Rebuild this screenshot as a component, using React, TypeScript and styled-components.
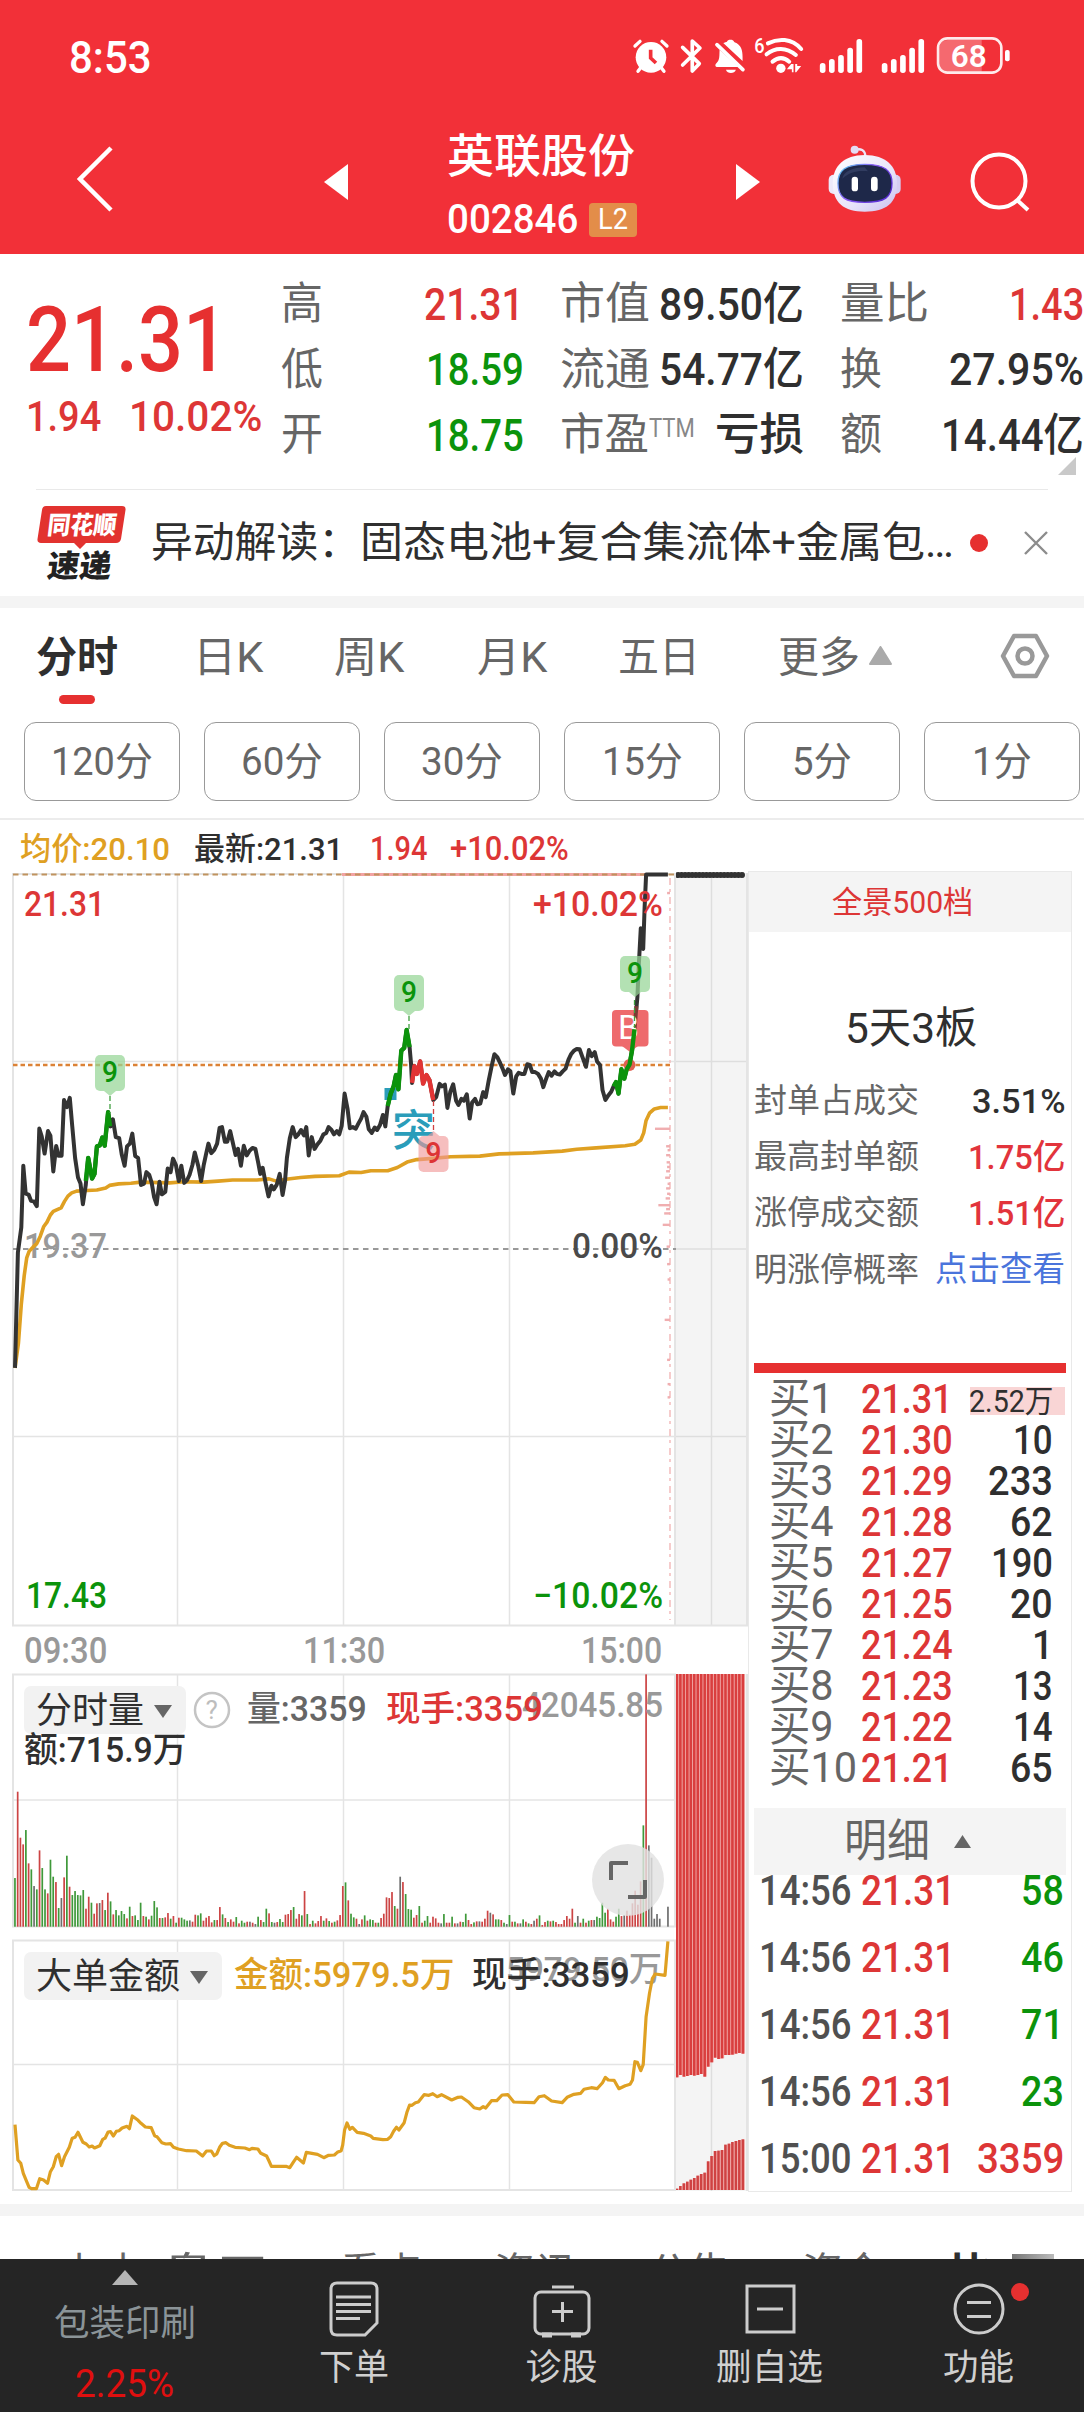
import React, { useLayoutEffect, useRef, useState } from "react";
import styled, { createGlobalStyle } from "styled-components";

const FONT = 'Roboto, "Noto Sans CJK SC", sans-serif';
const C = {
  brand: "#f23038",
  red: "#dd3636",
  green: "#0b930b",
  ink: "#2f2f2f",
  grey: "#666666",
  pale: "#999999",
  band: "#f4f4f4",
  line: "#e4e4e4",
  gold: "#dfa022",
};

const Global = createGlobalStyle`
  html, body { margin: 0; padding: 0; background: #fff; }
  body { width: 1084px; height: 2412px; overflow: hidden; font-family: ${FONT}; }
  * { box-sizing: border-box; }
`;

/* ---------- text that is condensed to a given width ---------- */
const FitBox = styled.span<{ $w: number; $size: number; $color: string; $weight: number }>`
  display: block;
  flex: none;
  width: ${(p) => p.$w}px;
  height: ${(p) => Math.round(p.$size * 1.2)}px;
  line-height: ${(p) => Math.round(p.$size * 1.2)}px;
  font-size: ${(p) => p.$size}px;
  font-weight: ${(p) => p.$weight};
  color: ${(p) => p.$color};
  white-space: nowrap;
`;
const FitInner = styled.span`
  display: inline-block;
  vertical-align: top;
  transform-origin: 0 50%;
`;

function Fit(props: { w: number; size: number; color?: string; weight?: number; children: React.ReactNode }) {
  const ref = useRef<HTMLSpanElement>(null);
  const [scale, setScale] = useState(1);
  useLayoutEffect(() => {
    if (ref.current) setScale(props.w / ref.current.offsetWidth);
  }, [props.w, props.children]);
  return (
    <FitBox $w={props.w} $size={props.size} $color={props.color ?? C.ink} $weight={props.weight ?? 400}>
      <FitInner ref={ref} style={{ transform: `scaleX(${scale})` }}>
        {props.children}
      </FitInner>
    </FitBox>
  );
}

/* ---------- frame ---------- */
const Screen = styled.div`
  width: 1084px;
  height: 2412px;
  display: flex;
  flex-direction: column;
  background: #fff;
  overflow: hidden;
`;
const Band = styled.div`
  height: 12px;
  flex: none;
  background: ${C.band};
`;

/* ---------- red header ---------- */
const Header = styled.header`
  height: 254px;
  flex: none;
  background: ${C.brand};
  color: #fff;
`;
const StatusBar = styled.div`
  height: 110px;
  display: flex;
  justify-content: space-between;
  align-items: flex-start;
  padding: 31px 71px 0 69px;
`;
const StatusSvg = styled.svg`
  margin-top: 4px;
  display: block;
`;
const TitleBar = styled.div`
  height: 144px;
  display: flex;
  align-items: center;
  padding-left: 77px;
`;
const BackSvg = styled.svg`
  margin: -6px 211px 0 0;
`;
const TitleBlock = styled.div`
  width: 190px;
  height: 132px;
  padding-top: 9px;
  margin: 0 99px 0 99px;
`;
const TitleLine = styled.div`
  height: 63px;
  display: flex;
  align-items: center;
  justify-content: space-between;
`;
const Level = styled.span`
  width: 48px;
  height: 34px;
  border-radius: 4px;
  background: #e38d49;
  display: flex;
  align-items: center;
  justify-content: center;
`;
const RobotSvg = styled.svg`
  margin: -6px 69px 0 68px;
`;

function StatusIcons() {
  const bars = (x: number) =>
    [30, 42, 54, 76, 102].map((h, i) => (
      <rect key={i} x={x + i * 27.5} y={144 - h} width="17" height={h} rx="8" fill="#fff" />
    ));
  return (
    <StatusSvg width="383" height="42" viewBox="30 30 1150 126">
      <g fill="#fff" stroke="#fff" strokeLinecap="round">
        <circle cx="93" cy="97" r="46" stroke="none" />
        <path d="M45 63 L60 49 M126 49 L141 63 M62 128 L54 139 M124 128 L132 139" strokeWidth="10" fill="none" />
        <path d="M92 74 V99 L108 114" stroke={C.brand} strokeWidth="11" fill="none" strokeLinecap="butt" />
        <path d="M188 67 L238 116 L217 138 V48 L240 69 L188 120" fill="none" strokeWidth="11" strokeLinejoin="round" />
        <path d="M332 44 c9 0 10 6 12 8 c20 8 24 24 24 44 l0 12 l-58 -54 c4 -2 9 -3 11 -4 c2 -4 5 -6 11 -6z" stroke="none" />
        <path d="M299 74 L356 126 H290 c-6 -3 -4 -8 0 -12 c10 -10 8 -22 9 -40z" stroke="none" />
        <path d="M291 59 L369 134" strokeWidth="11" />
        <path d="M318 134 h30 c-4 13 -26 13 -30 0z" stroke="none" />
        <path d="M444 55 C474 40 515 38 544 72 M440 88 C466 66 500 66 528 90 M458 110 C475 96 492 96 508 110" fill="none" strokeWidth="12" />
        <circle cx="483" cy="130" r="14" stroke="none" />
        <path d="M514 117 L501 133 H516 V142 H521 V117z M526 117 V142 H529 L544 123 H532 V117z" stroke="none" />
      </g>
      <text x="403" y="83" fontSize="62" fontWeight="500" fill="#fff" textLength="31" lengthAdjust="spacingAndGlyphs">6</text>
      {bars(600)}
      {bars(786)}
      <path d="M985 45 H1086 V140 H985 q-26 0 -26 -26 V71 q0 -26 26 -26z" fill="#fff" opacity="0.28" />
      <rect x="955" y="40" width="190" height="103" rx="28" fill="none" stroke="#fff" strokeOpacity="0.9" strokeWidth="8" />
      <rect x="1156" y="75" width="14" height="34" rx="6" fill="#fff" />
      <text x="993" y="126" fontSize="96" fontWeight="600" fill="#fff" textLength="108" lengthAdjust="spacingAndGlyphs">68</text>
    </StatusSvg>
  );
}

function Robot() {
  return (
    <RobotSvg width="73" height="68" viewBox="625 361 219 204">
      <defs>
        <linearGradient id="head" x1="0" y1="0" x2="1" y2="1">
          <stop offset="0" stopColor="#ffffff" />
          <stop offset="0.6" stopColor="#e8e4fa" />
          <stop offset="1" stopColor="#c9bff0" />
        </linearGradient>
        <linearGradient id="rim" x1="0" y1="0" x2="1" y2="0.6">
          <stop offset="0" stopColor="#58d6ef" />
          <stop offset="0.5" stopColor="#8b5cf6" />
          <stop offset="1" stopColor="#5b2fd6" />
        </linearGradient>
      </defs>
      <path d="M706 376 C722 370 737 376 737 396" fill="none" stroke="#ece6f8" strokeWidth="7" />
      <circle cx="705" cy="375" r="12" fill="#e4dcf5" />
      <rect x="627" y="450" width="32" height="58" rx="15" fill="#ece9fa" />
      <rect x="811" y="450" width="32" height="58" rx="15" fill="#d5cef2" />
      <path d="M735 391 C800 391 831 425 832 475 C833 535 800 561 735 561 C672 561 640 535 639 475 C640 425 672 391 735 391z" fill="url(#head)" />
      <path d="M735 419 C795 419 817 438 817 476 C817 518 795 533 735 533 C676 533 655 518 655 476 C655 438 676 419 735 419z" fill="#1e2849" stroke="url(#rim)" strokeWidth="4" />
      <path d="M735 428 C700 428 672 440 668 462 C690 440 720 436 745 440z" fill="#3d4a70" opacity="0.6" />
      <rect x="696" y="456" width="19" height="44" rx="9.5" fill="#fff" />
      <rect x="754" y="456" width="20" height="44" rx="10" fill="#fff" />
    </RobotSvg>
  );
}

/* ---------- quote ---------- */
const Quote = styled.section`
  height: 235px;
  flex: none;
  display: flex;
  position: relative;
  padding: 18px 0 0 26px;
`;
const QuoteMain = styled.div`
  width: 255px;
`;
const BigPrice = styled.div`
  margin-top: 14px;
`;
const Change = styled.div`
  display: flex;
  gap: 28px;
  margin-top: -5px;
`;
const StatCol = styled.div<{ $w: number; $gap: number }>`
  width: ${(p) => p.$w}px;
  margin-right: ${(p) => p.$gap}px;
  flex: none;
`;
const StatRow = styled.div`
  height: 65.5px;
  display: flex;
  align-items: center;
  justify-content: space-between;
`;
const StatLabel = styled.div`
  display: flex;
  align-items: center;
`;
const Ttm = styled.span`
  margin-top: -14px;
  display: block;
`;
const Corner = styled.svg`
  position: absolute;
  right: 8px;
  top: 203px;
`;
const Hr = styled.div`
  height: 1px;
  flex: none;
  margin: 0 36px;
  background: #e9e9e9;
`;

/* ---------- news ---------- */
const News = styled.section`
  height: 106px;
  flex: none;
  display: flex;
  align-items: center;
  padding-left: 37px;
`;
const Logo = styled.svg`
  flex: none;
  margin-right: 25px;
`;
const Dot = styled.span`
  width: 18px;
  height: 18px;
  border-radius: 9px;
  background: #e63030;
  margin: 0 36px 0 16px;
`;

/* ---------- tabs ---------- */
const Tabs = styled.nav`
  height: 114px;
  flex: none;
  display: flex;
  padding-left: 36px;
`;
const Tab = styled.div<{ $gap: number }>`
  margin-right: ${(p) => p.$gap}px;
  padding-top: 25px;
  display: flex;
  flex-direction: column;
  align-items: center;
`;
const Underline = styled.span`
  width: 36px;
  height: 9px;
  border-radius: 5px;
  background: #e63030;
  margin: 12px 0 0 0;
`;
const TabIcon = styled.svg<{ $top: number; $right: number }>`
  margin: ${(p) => p.$top}px ${(p) => p.$right}px 0 0;
`;
const Periods = styled.div`
  height: 96px;
  flex: none;
  display: flex;
  gap: 24px;
  padding-left: 24px;
`;
const Period = styled.button`
  width: 156px;
  height: 79px;
  flex: none;
  padding: 2px 0 0;
  border: 1px solid #999;
  border-radius: 12px;
  background: #fff;
  font-family: inherit;
  display: flex;
  align-items: center;
  justify-content: center;
`;
const Legend = styled.div`
  height: 52px;
  flex: none;
  border-top: 2px solid #ececec;
  display: flex;
  align-items: center;
  padding: 7px 0 0 20px;
`;
const Space = styled.span<{ $w: number }>`
  width: ${(p) => p.$w}px;
  flex: none;
`;

/* ---------- charts ---------- */
const Board = styled.main`
  height: 1334px;
  flex: none;
  display: flex;
`;
const Charts = styled.div`
  width: 676px;
  flex: none;
`;
const AfterHours = styled.div`
  width: 72px;
  flex: none;
`;
const Plot = styled.svg`
  display: block;
`;
const Pane = styled.div<{ $mb?: number }>`
  position: relative;
  margin-bottom: ${(p) => p.$mb ?? 0}px;
`;
const Axis = styled.div`
  height: 46px;
  display: flex;
  align-items: center;
  justify-content: space-between;
  padding: 2px 14px 0 24px;
`;
const PaneHead = styled.div`
  position: absolute;
  left: 24px;
  top: 13px;
  display: flex;
  align-items: center;
  height: 48px;
`;
const PaneSub = styled.div`
  position: absolute;
  left: 24px;
  top: 57px;
`;
const Chip = styled.span<{ $w: number }>`
  width: ${(p) => p.$w}px;
  height: 48px;
  border-radius: 7px;
  background: #f2f2f2;
  display: flex;
  align-items: center;
  justify-content: space-between;
  padding: 2px 14px 0 12px;
  flex: none;
`;
const Expand = styled.div`
  position: absolute;
  left: 592px;
  top: 171px;
  width: 72px;
  height: 72px;
  border-radius: 36px;
  background: rgba(226, 226, 226, 0.82);
  display: flex;
  align-items: center;
  justify-content: center;
`;

type Pt = number[];
const KX = 2.0632;
const path = (pts: Pt, y0: number, ky: number) => {
  let d = "";
  for (let i = 0; i < pts.length; i += 2)
    d += (i ? "L" : "M") + (pts[i] / KX).toFixed(1) + " " + (y0 + pts[i + 1] / ky).toFixed(1);
  return d;
};

const OPEN: Pt = [31,1478,37,1155,44,1085,48,912,53,990,59,993,64,1010,70,1012,76,1025,81,808,86,830,92,878,99,815,104,828,110,928,116,857,121,884,127,884,132,728,138,748,144,722,149,800,155,890,161,945,166,962,171,1020,177,965,182,890,190,948,195,935,200,858,206,855,211,833,216,856,223,762,228,802,233,782,239,832,246,835,251,880,257,912,262,858,268,850,273,822,279,885,285,890,291,966,297,962,302,930,308,938,313,960,318,1000,323,1020,329,957,334,992,341,985,346,920,352,930,357,892,363,910,369,955,374,912,380,960,386,952,391,938,397,910,402,875,409,912,415,955,420,912,425,880,430,850,436,877,442,868,448,850,453,806,458,804,464,845,469,845,475,815,480,845,486,882,491,865,497,912,503,856,509,883,515,870,521,862,527,865,533,905,537,935,542,918,548,960,554,998,560,968,565,978,571,965,577,935,583,994,588,955,592,890,598,835,604,804,610,832,615,825,621,812,627,827,632,804,637,883,643,832,649,865,655,852,661,842,667,825,673,820,678,804,684,812,689,824,695,815,700,824,705,800,711,710,717,752,722,807,728,804,734,808,739,795,745,780,750,762,756,775,761,810,767,820,773,805,778,812,784,798,790,770,795,802,800,745,806,710,812,690,817,658,822,698,828,590,834,582,839,532,845,580,848,625,850,680,855,633,860,655,867,620,873,682,880,658,886,672,894,728,900,720,907,683,912,690,918,685,923,750,929,705,935,684,941,730,946,742,952,725,957,730,963,712,969,780,974,735,980,725,985,740,991,738,997,706,1002,720,1008,675,1014,635,1020,600,1026,608,1032,625,1037,640,1042,658,1048,642,1053,648,1059,710,1065,662,1070,652,1076,655,1082,655,1088,628,1093,630,1098,650,1104,650,1110,655,1116,668,1121,692,1127,668,1132,650,1138,660,1144,648,1149,655,1155,657,1161,648,1167,640,1173,615,1178,600,1184,590,1190,585,1196,586,1201,605,1209,635,1215,588,1221,605,1227,594,1232,620,1238,630,1243,700,1249,728,1255,715,1261,705,1266,690,1271,678,1276,710,1282,642,1288,668,1293,642,1299,628,1304,590,1309,530,1315,440,1318,350,1322,247,1327,305,1330,190,1333,97,1378,97];
const UP_A: Pt = [177,955,182,890,190,948,195,935,200,858,206,855,211,833,216,856,223,762,227,802];
const UP_B: Pt = [800,745,806,710,812,690,817,658,822,698,828,590,834,582,839,532,845,580];
const UP_C: Pt = [1266,690,1271,678,1276,710,1282,642,1288,668,1293,642,1299,628,1304,590,1309,530];
const DOWN: Pt = [850,680,855,633,860,655,867,620,873,682,880,658,886,672,894,728];
const AVG: Pt = [31,1478,38,1410,44,1300,50,1220,55,1170,60,1152,68,1140,76,1130,83,1110,90,1083,97,1070,104,1050,110,1040,118,1035,126,1030,133,1012,140,997,148,988,158,983,170,982,200,980,218,974,226,967,245,963,270,961,290,958,350,960,380,957,420,958,450,955,480,952,530,952,555,949,570,955,590,950,620,945,650,942,700,940,720,930,745,931,765,926,800,926,820,917,840,902,860,895,880,893,930,887,990,885,1030,879,1100,876,1160,871,1190,866,1230,862,1290,856,1310,852,1322,840,1328,820,1333,785,1340,765,1350,753,1363,749,1378,749];
const ORDERS: Pt = [31,674,37,780,43,790,48,820,55,845,60,862,65,866,75,866,82,836,90,840,98,850,104,815,110,800,116,770,121,763,127,797,133,770,143,742,149,715,155,712,161,697,171,727,178,732,184,741,190,738,195,744,206,737,212,718,217,714,223,696,228,695,234,708,240,694,246,692,252,684,262,679,267,686,273,648,285,661,291,670,300,681,312,683,319,707,324,710,334,728,342,732,352,731,358,742,368,747,385,752,405,753,418,768,426,753,436,753,442,767,447,762,453,742,459,730,466,728,473,736,485,742,505,744,515,749,520,745,532,747,538,760,550,768,555,783,560,799,590,799,598,803,605,787,612,772,626,789,632,757,655,763,668,773,678,766,690,765,696,757,704,752,707,735,711,690,716,669,722,688,727,682,737,697,750,700,765,708,770,715,790,719,800,718,806,710,812,694,818,682,823,690,834,668,840,635,845,615,850,616,857,608,863,606,875,584,885,586,893,581,902,590,911,584,932,600,945,592,952,591,966,605,978,623,990,627,997,620,1002,624,1014,602,1025,602,1036,585,1048,584,1060,606,1085,607,1102,608,1112,590,1123,587,1138,603,1160,608,1170,592,1184,583,1198,580,1205,568,1220,563,1232,566,1243,548,1249,532,1255,540,1267,541,1277,566,1290,557,1300,553,1305,540,1310,485,1315,487,1322,512,1327,494,1333,350,1340,280,1346,235,1352,222,1372,226,1378,124];

const VOL =
  "146g 405r 267r 247r 290g 190r 172g 122k 112g 229r 176g 112g 100r 201g 150g 134r 56g 86k 148r 213g 120r 95g 107g 95g 94g 110g 54r 90r 72g 39r 70r 71k 80r 50g 102r 76g 37r 50g 34g 47g 38g 25r 60g 32r 34g 20g 72g 32r 30g 22r 33g 77g 58g 26r 26g 28r 41r 24g 32r 12g 27r 27g 22g 18g 19k 15r 36r 34g 40g 18r 27r 32r 13r 20g 20r 59r 37g 26r 14g 22r 15r 29g 10r 18g 12g 15r 15k 12r 8k 30g 20r 14g 54g 40r 14g 12k 14r 23g 14g 36r 38r 50r 59g 24r 38r 34g 107r 38g 8r 18g 10r 17r 32r 18g 25r 17g 12r 15g 19r 35r 122r 133g 79r 39g 28g 24r 8k 22r 34g 18r 22g 20g 12r 12g 26r 39r 88r 86r 104r 62g 54r 150k 134r 98g 53g 51g 27r 35r 62g 12r 18g 32g 12r 30r 25r 12r 10k 38g 12r 12r 30g 10r 10k 15r 14g 39g 20r 8r 13g 16r 16k 15r 24r 48r 42k 37r 22g 22g 20r 12g 8k 35g 15r 15g 10r 10k 22g 15r 10g 8r 18k 24r 34g 5r 14r 18g 16r 18g 14r 8r 8r 20r 32r 24r 54r 12g 32k 12r 24g 12r 18g 20r 20k 30g 26g 72g 42g 54r 22r 15r 30g 54g 32r 34k 48r 36r 70r 108r 66r 136r 304g 757r 244k 207k 24k 38k 24k 0k 0k 60k".split(
    " "
  );
const VOL_STEP = 653 / (VOL.length - 1);
const BAR_COLOR: Record<string, string> = { r: "#cc4444", g: "#3f993a", k: "#6e6e6e" };

const UPPER = [532, 525, 530, 528, 525, 527, 525, 522, 530, 500, 487, 473, 477, 475, 465, 465, 464, 461, 459, 461];
const LOWER = [866, 858, 850, 845, 839, 834, 827, 822, 818, 784, 768, 753, 752, 750, 734, 731, 726, 723, 720, 718];

const TICKS: number[][] = [
  [808, 31], [1022, 24], [1077, 15], [1045, 12], [1343, 11], [148, 6], [857, 8], [868, 5], [882, 8], [902, 7], [915, 6],
  [927, 8], [945, 10], [962, 5], [975, 8], [990, 6], [1003, 9], [1033, 8], [1138, 7], [1187, 6], [1230, 5], [1455, 6],
  [1523, 5], [1560, 5],
];

function T(p: { x: number; y: number; w: number; s: number; c: string; children: string; weight?: number }) {
  return (
    <text x={p.x} y={p.y} fontSize={p.s} fill={p.c} fontWeight={p.weight ?? 500} textLength={p.w} lengthAdjust="spacingAndGlyphs">
      {p.children}
    </text>
  );
}

function Flag(p: { x: number; y: number; up?: boolean; color: string; bg: string }) {
  return (
    <g>
      <rect x={p.x} y={p.y} width="30" height="36" rx="5" fill={p.bg} />
      <path d={p.up ? `M${p.x + 9} ${p.y} l6 -5 l6 5z` : `M${p.x + 9} ${p.y + 36} l6 5 l6 -5z`} fill={p.bg} />
      <T x={p.x + 7} y={p.y + 27} w={16} s={30} c={p.color}>9</T>
    </g>
  );
}

function Grid(p: { top: number; mid: number[]; bottom: number }) {
  return (
    <g stroke={C.line} strokeWidth="1.5">
      {[177.5, 343.5, 509.5].map((x) => (
        <line key={x} x1={x} x2={x} y1={p.top} y2={p.bottom} />
      ))}
      {p.mid.map((y) => (
        <line key={y} x1="13" x2="676" y1={y} y2={y} />
      ))}
      <path d={`M676 ${p.top} H13 V${p.bottom} H676`} fill="none" strokeWidth="2" />
      <line x1="675" x2="675" y1={p.top} y2={p.bottom} strokeWidth="2" />
    </g>
  );
}

function PriceChart() {
  const line = (pts: Pt, stroke: string, w = 4) => (
    <path d={path(pts, 840, 2.8)} fill="none" stroke={stroke} strokeWidth={w} strokeLinejoin="round" />
  );
  return (
    <Plot width="676" height="757" viewBox="0 870 676 757">
      <Grid top={874} mid={[1061.5, 1436.5]} bottom={1625.5} />
      <line x1="342" x2="650" y1="874.5" y2="874.5" stroke="#f2a3a3" strokeWidth="3" />
      <line x1="13" x2="676" y1="874.5" y2="874.5" stroke="#c0935f" strokeWidth="2" strokeDasharray="5.5 4" />
      <line x1="13" x2="672" y1="1065" y2="1065" stroke="#dc8236" strokeWidth="2.4" strokeDasharray="4.5 3" />
      <line x1="13" x2="676" y1="1249" y2="1249" stroke="#999" strokeWidth="2" strokeDasharray="5.5 4.5" />
      <line x1="670" x2="670" y1="878" y2="1620" stroke="#f3bcbc" strokeWidth="1.5" strokeDasharray="7 4 3 5" />
      {TICKS.map(([y, w]) => (
        <rect key={y} x={670 - w / KX} y={839 + y / 2.8} width={w / KX} height="2.4" fill="#f0aeb0" />
      ))}
      <T x={24} y={1258} w={83} s={35} c={C.pale}>19.37</T>
      {line(AVG, C.gold, 3.6)}
      <rect x="384.5" y="1088" width="12" height="12" fill="#2a9db8" />
      {line(OPEN, "#333")}
      {line(UP_A, "#0b930b", 4.4)}
      {line(UP_B, "#0b930b", 4.4)}
      {line(DOWN, "#e23434", 4.4)}
      <rect x="612" y="1010" width="36.5" height="36.5" rx="4" fill="#ee6a6c" />
      <path d="M622 1046 l8 6 l8 -6z" fill="#ee6a6c" />
      <circle cx="629.5" cy="1065" r="6" fill="#e06050" />
      <path d={path([1309, 530, 1313, 465], 840, 2.8)} stroke="#7a3b34" strokeWidth="4" fill="none" />
      <T x={618} y={1039} w={21} s={33} c="#fff" weight={400}>B</T>
      {line(UP_C, "#0b930b", 4.4)}
      <g strokeWidth="1.3" strokeDasharray="5 3" stroke="#3f9f3f">
        <path d="M110 1096 V1113 M409 1016 V1030 M634.5 1000 V1028" />
        <path d="M433.5 1101 V1131" stroke="#d04040" />
      </g>
      <T x={392} y={1146} w={43} s={43} c="#2a9dba" weight={500}>突</T>
      <Flag x={95} y={1055} color={C.green} bg="rgba(150,214,150,.72)" />
      <Flag x={394} y={975} color={C.green} bg="rgba(150,214,150,.72)" />
      <Flag x={620} y={956} color={C.green} bg="rgba(150,214,150,.72)" />
      <Flag x={418.5} y={1136} up color="#dd3434" bg="rgba(240,150,150,.62)" />
      <T x={24} y={916} w={81} s={35} c={C.red}>21.31</T>
      <T x={533} y={916} w={130} s={35} c={C.red}>+10.02%</T>
      <T x={572} y={1258} w={91} s={35} c="#4a4a4a">0.00%</T>
      <T x={26} y={1608} w={81} s={36} c={C.green}>17.43</T>
      <T x={533} y={1608} w={130} s={36} c={C.green}>−10.02%</T>
    </Plot>
  );
}

function VolumeChart() {
  return (
    <Plot width="676" height="255" viewBox="0 1673 676 255">
      <Grid top={1674.5} mid={[1800]} bottom={1926.5} />
      {VOL.map((v, i) => {
        const h = parseInt(v, 10) / 3;
        return <rect key={i} x={14.1 + i * VOL_STEP} y={1926.7 - h} width="1.7" height={h} fill={BAR_COLOR[v.slice(-1)]} />;
      })}
      <T x={522} y={1717} w={141} s={35} c={C.pale}>42045.85</T>
    </Plot>
  );
}

function OrderChart() {
  return (
    <Plot width="676" height="253" viewBox="0 1939 676 253">
      <Grid top={1940.5} mid={[2064.5]} bottom={2190} />
      <T x={506} y={1981} w={156} s={34} c={C.pale}>5979.50万</T>
      <path d={path(ORDERS, 1900, 3)} fill="none" stroke={C.gold} strokeWidth="3.2" strokeLinejoin="round" />
    </Plot>
  );
}

function AfterHoursTop() {
  return (
    <Plot width="72" height="757" viewBox="676 870 72 757">
      <rect x="676" y="873" width="72" height="753" fill={C.band} />
      <path d="M711.5 874 V1626 M676 1061.5 H748 M676 1249 H748 M676 1436.5 H748" stroke="#dedede" strokeWidth="1.5" />
      <path d="M747 873 V1626 M676 1625.5 H748" stroke={C.line} strokeWidth="2" />
      <line x1="678" x2="744" y1="875" y2="875" stroke="#333" strokeWidth="4.6" />
      <line x1="678" x2="745" y1="875" y2="875" stroke="#333" strokeWidth="6" strokeLinecap="round" strokeDasharray="0.1 3.45" />
    </Plot>
  );
}

function AfterHoursBars() {
  return (
    <Plot width="72" height="519" viewBox="676 1673 72 519">
      <rect x="676" y="1674" width="72" height="517" fill={C.band} />
      <path d="M711.5 1674 V2191 M747 1674 V2191" stroke="#dedede" strokeWidth="1.5" />
      {UPPER.map((b, i) => (
        <g key={"u" + i}>
          <rect x={675.6 + i * 3.47} y="1674" width="3.47" height={1900 + b / 3 - 1674} fill="#f3aaa8" />
          <rect x={675.6 + i * 3.47} y="1674" width="2.6" height={1900 + b / 3 - 1674} fill="#d93e3e" />
        </g>
      ))}
      {LOWER.map((t, i) => (
        <g key={"l" + i}>
          <rect x={675.6 + i * 3.47} y={1900 + t / 3} width="3.47" height={290 - t / 3} fill="#f3b4b2" />
          <rect x={675.6 + i * 3.47} y={1900 + t / 3} width="2.5" height={290 - t / 3} fill="#cf4242" />
        </g>
      ))}
    </Plot>
  );
}

/* ---------- order book ---------- */
const Book = styled.aside`
  width: 324px;
  height: 1321px;
  margin-top: 1px;
  border: 1px solid #e9e9e9;
  padding: 0;
`;
const BookHead = styled.div`
  height: 60px;
  background: ${C.band};
  display: flex;
  justify-content: center;
  align-items: center;
  padding: 0 16px 0 0;
`;
const Boards = styled.div`
  height: 141px;
  padding: 70px 0 0 96px;
`;
const Facts = styled.div`
  height: 290px;
  padding: 0 6px 0 5px;
`;
const Fact = styled.div`
  height: 56.2px;
  display: flex;
  align-items: center;
  justify-content: space-between;
`;
const Bar = styled.div`
  height: 10px;
  margin: 0 5px;
  background: #e63030;
`;
const Bids = styled.div`
  height: 435px;
  padding-top: 1px;
`;
const Bid = styled.div`
  height: 41px;
  display: grid;
  grid-template-columns: 92px 92px 119px;
  align-items: center;
  padding-left: 20px;
`;
const Qty = styled.span<{ $hot?: boolean }>`
  display: flex;
  align-items: center;
  justify-content: flex-end;
  height: ${(p) => (p.$hot ? 28 : 41)}px;
  width: ${(p) => (p.$hot ? 95 : 106)}px;
  margin-left: ${(p) => (p.$hot ? 17 : -6)}px;
  padding-right: ${(p) => (p.$hot ? 12 : 0)}px;
  margin-top: ${(p) => (p.$hot ? 4 : 0)}px;
  background: ${(p) => (p.$hot ? "#f9d5d5" : "none")};
`;
const DetailHead = styled.div`
  height: 67px;
  margin: 0 5px;
  background: ${C.band};
  display: flex;
  align-items: center;
  padding-left: 90px;
  gap: 24px;
`;
const Trade = styled.div`
  height: 67px;
  display: flex;
  align-items: center;
  padding: 0 7px 0 10px;
`;
const Trades = styled.div`
  margin-top: -18px;
`;
const Push = styled.span`
  flex: 1;
`;

const BIDS: [string, string, string, number][] = [
  ["买1", "21.31", "2.52万", 84], ["买2", "21.30", "10", 40], ["买3", "21.29", "233", 65], ["买4", "21.28", "62", 43],
  ["买5", "21.27", "190", 62], ["买6", "21.25", "20", 43], ["买7", "21.24", "1", 21], ["买8", "21.23", "13", 40],
  ["买9", "21.22", "14", 40], ["买10", "21.21", "65", 43],
];
const TRADES: [string, string, number, string][] = [
  ["14:56", "58", 43, C.green], ["14:56", "46", 43, C.green], ["14:56", "71", 43, C.green], ["14:56", "23", 43, C.green],
  ["15:00", "3359", 87, C.red],
];
const FACTS: [string, string, number, string, number][] = [
  ["封单占成交", "3.51%", 93, C.ink, 500], ["最高封单额", "1.75亿", 97, "#e2343c", 500],
  ["涨停成交额", "1.51亿", 97, "#e2343c", 500], ["明涨停概率", "点击查看", 130, "#4a74dc", 400],
];

/* ---------- lower strip and bottom bar ---------- */
const Strip = styled.div`
  height: 43px;
  flex: none;
  overflow: hidden;
  display: flex;
  padding: 33px 0 0 60px;
`;
const Swatch = styled.span`
  width: 42px;
  height: 10px;
  margin: 5px 0 0 20px;
  background: linear-gradient(90deg, #777, #bbb);
`;
const Bottom = styled.footer`
  height: 153px;
  flex: none;
  background: #252525;
  display: flex;
`;
const NavItem = styled.div<{ $w: number; $top: number }>`
  width: ${(p) => p.$w}px;
  padding-top: ${(p) => p.$top}px;
  display: flex;
  flex-direction: column;
  align-items: center;
  position: relative;
`;
const NavSvg = styled.svg`
  margin-bottom: 9px;
`;
const NavDot = styled.span`
  position: absolute;
  left: 137px;
  top: 24px;
  width: 18px;
  height: 18px;
  border-radius: 9px;
  background: #e63030;
`;
const Sector = styled.div<{ $top: number }>`
  margin-top: ${(p) => p.$top}px;
`;

export default function App() {
  return (
    <Screen>
      <Global />
      <Header>
        <StatusBar>
          <Fit w={83} size={45} color="#fff" weight={500}>8:53</Fit>
          <StatusIcons />
        </StatusBar>
        <TitleBar>
          <BackSvg width="36" height="66" viewBox="0 0 36 66">
            <path d="M34 2 L3 33 L34 64" fill="none" stroke="#fff" strokeWidth="4.5" />
          </BackSvg>
          <svg width="24" height="36" viewBox="0 0 24 36"><path d="M24 0 L0 18 L24 36z" fill="#fff" /></svg>
          <TitleBlock>
            <TitleLine><Fit w={188} size={46} color="#fff" weight={500}>英联股份</Fit></TitleLine>
            <TitleLine>
              <Fit w={131} size={40} color="#fff" weight={500}>002846</Fit>
              <Level><Fit w={30} size={29} color="#fff">L2</Fit></Level>
            </TitleLine>
          </TitleBlock>
          <svg width="24" height="36" viewBox="0 0 24 36"><path d="M0 0 L24 18 L0 36z" fill="#fff" /></svg>
          <Robot />
          <svg width="60" height="60" viewBox="0 0 60 60">
            <g fill="none" stroke="#fff" strokeWidth="4"><circle cx="29" cy="29" r="26.5" /><path d="M47 48 L58 58" /></g>
          </svg>
        </TitleBar>
      </Header>

      <Quote>
        <QuoteMain>
          <BigPrice><Fit w={202} size={91} color="#e63030" weight={500}>21.31</Fit></BigPrice>
          <Change>
            <Fit w={75} size={43} color={C.red} weight={500}>1.94</Fit>
            <Fit w={133} size={43} color={C.red} weight={500}>10.02%</Fit>
          </Change>
        </QuoteMain>
        <StatCol $w={243} $gap={36}>
          <StatRow><Fit w={42} size={44} color={C.grey}>高</Fit><Fit w={100} size={45} color={C.red} weight={500}>21.31</Fit></StatRow>
          <StatRow><Fit w={42} size={44} color={C.grey}>低</Fit><Fit w={98} size={45} color={C.green} weight={500}>18.59</Fit></StatRow>
          <StatRow><Fit w={42} size={44} color={C.grey}>开</Fit><Fit w={98} size={45} color={C.green} weight={500}>18.75</Fit></StatRow>
        </StatCol>
        <StatCol $w={244} $gap={36}>
          <StatRow><Fit w={90} size={44} color={C.grey}>市值</Fit><Fit w={145} size={45} weight={500}>89.50亿</Fit></StatRow>
          <StatRow><Fit w={90} size={44} color={C.grey}>流通</Fit><Fit w={145} size={45} weight={500}>54.77亿</Fit></StatRow>
          <StatRow>
            <StatLabel>
              <Fit w={89} size={44} color={C.grey}>市盈</Fit>
              <Ttm><Fit w={46} size={25} color="#888">TTM</Fit></Ttm>
            </StatLabel>
            <Fit w={89} size={44} weight={500}>亏损</Fit>
          </StatRow>
        </StatCol>
        <StatCol $w={244} $gap={0}>
          <StatRow><Fit w={89} size={44} color={C.grey}>量比</Fit><Fit w={75} size={45} color={C.red} weight={500}>1.43</Fit></StatRow>
          <StatRow><Fit w={42} size={44} color={C.grey}>换</Fit><Fit w={135} size={45} weight={500}>27.95%</Fit></StatRow>
          <StatRow><Fit w={42} size={44} color={C.grey}>额</Fit><Fit w={143} size={45} weight={500}>14.44亿</Fit></StatRow>
        </StatCol>
        <Corner width="18" height="18" viewBox="0 0 18 18"><path d="M18 0 V18 H0z" fill="#c9c9c9" /></Corner>
      </Quote>
      <Hr />

      <News>
        <Logo width="89" height="76" viewBox="0 0 89 76">
          <path d="M9 1 H85 q4 0 3.500 4 L84 34 q-1 4 -5 4 H49 L43 44 L37 38 H4 q-4 0 -3.500 -4 L5 5 q0.500 -4 4 -4z" fill="#e2322f" />
          <g transform="skewX(-7)" fontWeight="900">
            <text x="13" y="29" fontSize="25" fill="#fff" textLength="69" lengthAdjust="spacingAndGlyphs">同花顺</text>
            <text x="18" y="72" fontSize="31" fill="#222" textLength="64" lengthAdjust="spacingAndGlyphs">速递</text>
          </g>
        </Logo>
        <Fit w={209} size={42}>异动解读：</Fit>
        <Fit w={594} size={42}>固态电池+复合集流体+金属包…</Fit>
        <Dot />
        <svg width="24" height="24" viewBox="0 0 24 24"><path d="M1 1 L23 23 M23 1 L1 23" stroke="#8c8c8c" strokeWidth="2.4" /></svg>
      </News>
      <Band />

      <Tabs>
        <Tab $gap={75}><Fit w={82} size={42} weight={700}>分时</Fit><Underline /></Tab>
        <Tab $gap={71}><Fit w={70} size={42} color={C.grey}>日K</Fit></Tab>
        <Tab $gap={73}><Fit w={70} size={42} color={C.grey}>周K</Fit></Tab>
        <Tab $gap={71}><Fit w={70} size={42} color={C.grey}>月K</Fit></Tab>
        <Tab $gap={78}><Fit w={82} size={42} color={C.grey}>五日</Fit></Tab>
        <Tab $gap={9}><Fit w={82} size={42} color={C.grey}>更多</Fit></Tab>
        <TabIcon $top={38} $right={108} width="23" height="19" viewBox="0 0 23 19"><path d="M11.500 1 L22 18 H1z" fill="#aaa" stroke="#aaa" strokeLinejoin="round" strokeWidth="2" /></TabIcon>
        <TabIcon $top={25} $right={0} width="50" height="46" viewBox="0 0 50 46">
          <g fill="none" stroke="#999" strokeWidth="4.500" strokeLinejoin="round">
            <path d="M14 3 H36 L47 23 L36 43 H14 L3 23z" /><circle cx="25" cy="23" r="7.500" />
          </g>
        </TabIcon>
      </Tabs>
      <Periods>
        {([["120分", 102], ["60分", 82], ["30分", 82], ["15分", 81], ["5分", 60], ["1分", 60]] as [string, number][]).map(([t, w]) => (
          <Period key={t}><Fit w={w} size={39} color={C.grey}>{t}</Fit></Period>
        ))}
      </Periods>
      <Legend>
        <Fit w={150} size={32} color={C.gold} weight={500}>均价:20.10</Fit><Space $w={24} />
        <Fit w={149} size={32} weight={500}>最新:21.31</Fit><Space $w={27} />
        <Fit w={57} size={33} color={C.red} weight={500}>1.94</Fit><Space $w={23} />
        <Fit w={119} size={33} color={C.red} weight={500}>+10.02%</Fit>
      </Legend>

      <Board>
        <Charts>
          <PriceChart />
          <Axis>
            <Fit w={83} size={36} color={C.pale} weight={500}>09:30</Fit>
            <Fit w={82} size={36} color={C.pale} weight={500}>11:30</Fit>
            <Fit w={81} size={36} color={C.pale} weight={500}>15:00</Fit>
          </Axis>
          <Pane $mb={11}>
            <VolumeChart />
            <PaneHead>
              <Chip $w={162}>
                <Fit w={108} size={36}>分时量</Fit>
                <svg width="18" height="13" viewBox="0 0 18 13"><path d="M0 0 H18 L9 13z" fill="#666" /></svg>
              </Chip>
              <Space $w={7} />
              <svg width="38" height="38" viewBox="0 0 38 38">
                <circle cx="19" cy="19" r="17" fill="none" stroke="#c4c4c4" strokeWidth="2.500" />
                <text x="12.500" y="28" fontSize="26" fill="#bdbdbd">?</text>
              </svg>
              <Space $w={16} />
              <Fit w={120} size={35} color={C.grey} weight={500}>量:3359</Fit><Space $w={19} />
              <Fit w={157} size={35} color={C.red} weight={500}>现手:3359</Fit>
            </PaneHead>
            <PaneSub><Fit w={163} size={35} weight={500}>额:715.9万</Fit></PaneSub>
            <Expand>
              <svg width="40" height="40" viewBox="0 0 40 40">
                <path d="M3 20 V3 H20 M20 37 H37 V20" fill="none" stroke="#666" strokeWidth="4" strokeLinejoin="round" />
              </svg>
            </Expand>
          </Pane>
          <Pane>
            <OrderChart />
            <PaneHead>
              <Chip $w={198}>
                <Fit w={144} size={36}>大单金额</Fit>
                <svg width="18" height="13" viewBox="0 0 18 13"><path d="M0 0 H18 L9 13z" fill="#666" /></svg>
              </Chip>
              <Space $w={12} />
              <Fit w={220} size={35} color={C.gold} weight={500}>金额:5979.5万</Fit><Space $w={18} />
              <Fit w={158} size={35} weight={500}>现手:3359</Fit>
            </PaneHead>
          </Pane>
        </Charts>
        <AfterHours>
          <Pane $mb={46}><AfterHoursTop /></Pane>
          <AfterHoursBars />
        </AfterHours>
        <Book>
          <BookHead><Fit w={141} size={31} color={C.red}>全景500档</Fit></BookHead>
          <Boards><Fit w={132} size={43}>5天3板</Fit></Boards>
          <Facts>
            {FACTS.map(([a, b, w, c, wt]) => (
              <Fact key={a}><Fit w={165} size={33} color={C.grey}>{a}</Fit><Fit w={w} size={34} color={c} weight={wt}>{b}</Fit></Fact>
            ))}
          </Facts>
          <Bar />
          <Bids>
            {BIDS.map(([a, p, q, w], i) => (
              <Bid key={a}>
                <Fit w={a.length > 2 ? 88 : 65} size={42} color={C.grey}>{a}</Fit>
                <Fit w={92} size={41} color={C.red} weight={500}>{p}</Fit>
                <Qty $hot={i === 0}><Fit w={w} size={i ? 41 : 31} weight={i ? 500 : 400}>{q}</Fit></Qty>
              </Bid>
            ))}
          </Bids>
          <DetailHead>
            <Fit w={86} size={45} color={C.grey}>明细</Fit>
            <svg width="17" height="13" viewBox="0 0 17 13"><path d="M0 13 H17 L8.500 0z" fill="#666" /></svg>
          </DetailHead>
          <Trades>
            {TRADES.map(([t, q, w, c], i) => (
              <Trade key={i}>
                <Fit w={93} size={42} color="#505050" weight={500}>{t}</Fit><Space $w={9} />
                <Fit w={94} size={42} color={C.red} weight={500}>21.31</Fit>
                <Push />
                <Fit w={w} size={42} color={c} weight={500}>{q}</Fit>
              </Trade>
            ))}
          </Trades>
        </Book>
      </Board>
      <Band />

      <Strip>
        <Fit w={82} size={42} color={C.grey}>上止</Fit><Space $w={18} />
        <Fit w={110} size={42} color={C.grey}>盘口</Fit><Space $w={70} />
        <Fit w={82} size={42} color={C.grey}>看点</Fit><Space $w={72} />
        <Fit w={82} size={42} color={C.grey}>资讯</Fit><Space $w={72} />
        <Fit w={82} size={42} color={C.grey}>公告</Fit><Space $w={72} />
        <Fit w={82} size={42} color={C.grey}>资金</Fit><Space $w={66} />
        <Fit w={42} size={42} weight={700}>比</Fit>
        <Swatch />
      </Strip>
      <Bottom>
        <NavItem $w={249} $top={11}>
          <svg width="26" height="15" viewBox="0 0 26 15"><path d="M13 0 L26 15 H0z" fill="#b5b5b5" /></svg>
          <Sector $top={18}><Fit w={142} size={36} color="#8b9498">包装印刷</Fit></Sector>
          <Sector $top={15}><Fit w={99} size={38} color="#e00f0f">2.25%</Fit></Sector>
        </NavItem>
        <NavItem $w={209} $top={21}>
          <NavSvg width="60" height="58" viewBox="0 0 60 58">
            <g fill="none" stroke="#ccc" strokeWidth="3">
              <path d="M13 3 H47 q6 0 6 6 V43 L41 55 H13 q-6 0 -6 -6 V9 q0 -6 6 -6z" />
              <path d="M12 17 H47 M12 24.500 H47 M12 31.500 H47 M12 38.500 H36" />
            </g>
          </NavSvg>
          <Fit w={70} size={36} color="#d0d0d0">下单</Fit>
        </NavItem>
        <NavItem $w={207} $top={21}>
          <NavSvg width="60" height="58" viewBox="0 0 60 58">
            <g fill="none" stroke="#ccc" strokeWidth="3">
              <rect x="3" y="12" width="54" height="42" rx="6" />
              <path d="M20 7 H42 M20 31.500 H41 M30.500 22 V42" />
              <path d="M10 55 H20 M39 55 H49" strokeWidth="5" />
            </g>
          </NavSvg>
          <Fit w={72} size={36} color="#d0d0d0">诊股</Fit>
        </NavItem>
        <NavItem $w={209} $top={21}>
          <NavSvg width="60" height="58" viewBox="0 0 60 58">
            <g fill="none" stroke="#ccc" strokeWidth="3">
              <rect x="7" y="6" width="47" height="46" /><path d="M17 29 H43" />
            </g>
          </NavSvg>
          <Fit w={107} size={36} color="#d0d0d0">删自选</Fit>
        </NavItem>
        <NavItem $w={209} $top={21}>
          <NavSvg width="60" height="58" viewBox="0 0 60 58">
            <g fill="none" stroke="#ccc" strokeWidth="3">
              <circle cx="30" cy="29" r="24" /><path d="M18 22.500 H42 M18 36.500 H42" />
            </g>
          </NavSvg>
          <NavDot />
          <Fit w={71} size={36} color="#d0d0d0">功能</Fit>
        </NavItem>
      </Bottom>
    </Screen>
  );
}
